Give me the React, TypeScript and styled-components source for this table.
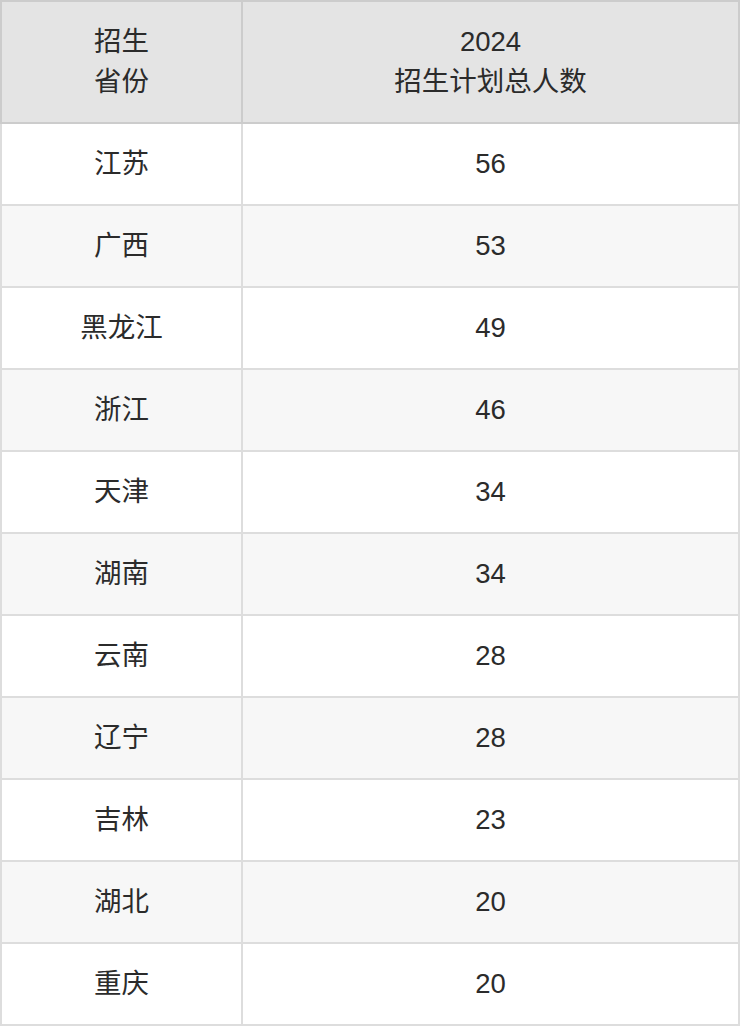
import React from "react";
import styled, { createGlobalStyle } from "styled-components";

const GlobalStyle = createGlobalStyle`
  html, body {
    margin: 0;
    padding: 0;
    background: #ffffff;
  }
  body {
    font-family: "Liberation Sans", "Noto Sans CJK SC", sans-serif;
    color: #2b2b2b;
  }
`;

const Table = styled.table`
  width: 740px;
  border-collapse: separate;
  border-spacing: 0;
  table-layout: fixed;
  font-size: 27.5px;
  line-height: 40px;
`;

const HeadCell = styled.th<{ $first?: boolean }>`
  height: 120px;
  padding: 0 8px;
  background: #e4e4e4;
  font-weight: 400;
  text-align: center;
  vertical-align: middle;
  color: #2b2b2b;
  border-top: 2px solid #cccccc;
  border-right: 2px solid #cccccc;
  border-bottom: 2px solid #cccccc;
  border-left: ${(p) => (p.$first ? "2px solid #cccccc" : "none")};
`;

const Row = styled.tr<{ $striped: boolean }>`
  background: ${(p) => (p.$striped ? "#f7f7f7" : "#ffffff")};
`;

const Cell = styled.td<{ $first?: boolean }>`
  height: 80px;
  padding: 0 8px;
  text-align: center;
  vertical-align: middle;
  border-right: 2px solid #dddddd;
  border-bottom: 2px solid #dddddd;
  border-left: ${(p) => (p.$first ? "2px solid #dddddd" : "none")};
`;

const rows: [string, number][] = [
  ["江苏", 56],
  ["广西", 53],
  ["黑龙江", 49],
  ["浙江", 46],
  ["天津", 34],
  ["湖南", 34],
  ["云南", 28],
  ["辽宁", 28],
  ["吉林", 23],
  ["湖北", 20],
  ["重庆", 20],
];

const App = () => {
  return (
    <>
      <GlobalStyle />
      <Table>
        <colgroup>
          <col style={{ width: 243 }} />
          <col style={{ width: 497 }} />
        </colgroup>
        <thead>
          <tr>
            <HeadCell $first>
              招生
              <br />
              省份
            </HeadCell>
            <HeadCell>
              2024
              <br />
              招生计划总人数
            </HeadCell>
          </tr>
        </thead>
        <tbody>
          {rows.map(([province, count], i) => (
            <Row key={province} $striped={i % 2 === 1}>
              <Cell $first>{province}</Cell>
              <Cell>{count}</Cell>
            </Row>
          ))}
        </tbody>
      </Table>
    </>
  );
};

export default App;
